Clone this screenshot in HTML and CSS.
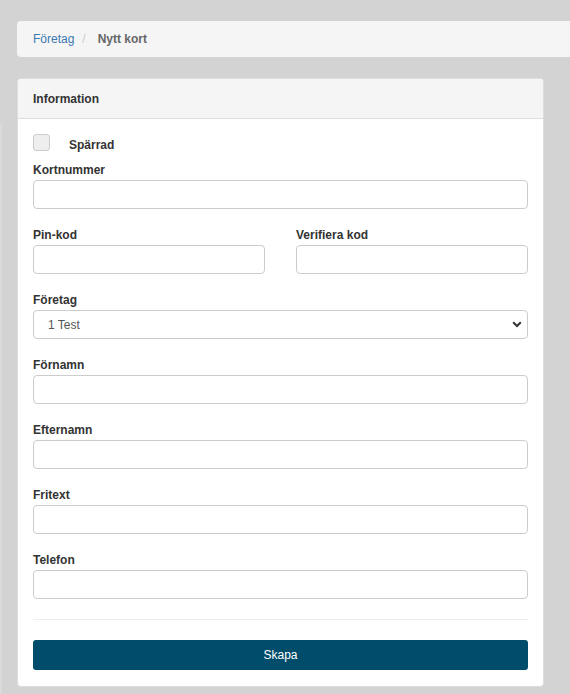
FILE: index.html
```
<!DOCTYPE html>
<html lang="sv">
<head>
<meta charset="utf-8">
<title>Nytt kort</title>
<link rel="stylesheet" href="styles.css">
</head>
<body>
<div class="edge"></div>
<div class="page">
  <nav class="crumbs">
    <a class="crumb-link" href="#">Företag</a>
    <span class="crumb-sep">/</span>
    <span class="crumb-active">Nytt kort</span>
  </nav>
  <section class="card">
    <header class="card-head">Information</header>
    <div class="card-body">
      <div class="check-row">
        <span class="checkbox"></span>
        <span class="check-label">Spärrad</span>
      </div>
      <div class="group">
        <label class="lbl">Kortnummer</label>
        <div class="input"></div>
      </div>
      <div class="group row2">
        <div class="col">
          <label class="lbl">Pin-kod</label>
          <div class="input"></div>
        </div>
        <div class="col">
          <label class="lbl">Verifiera kod</label>
          <div class="input"></div>
        </div>
      </div>
      <div class="group">
        <label class="lbl">Företag</label>
        <div class="input select">
          <span class="select-text">1 Test</span>
          <svg class="chev" width="10" height="7" viewBox="0 0 10 7"><path d="M1.2 1.3 L5 5 L8.8 1.3" fill="none" stroke="#333" stroke-width="2"/></svg>
        </div>
      </div>
      <div class="group">
        <label class="lbl">Förnamn</label>
        <div class="input"></div>
      </div>
      <div class="group">
        <label class="lbl">Efternamn</label>
        <div class="input"></div>
      </div>
      <div class="group">
        <label class="lbl">Fritext</label>
        <div class="input"></div>
      </div>
      <div class="group last">
        <label class="lbl">Telefon</label>
        <div class="input"></div>
      </div>
      <hr class="divider">
      <button class="btn">Skapa</button>
    </div>
  </section>
</div>
</body>
</html>
```
FILE: styles.css
```
html, body {
  margin: 0;
  padding: 0;
  background: #d3d3d3;
  font-family: "Liberation Sans", Arial, sans-serif;
  font-size: 12px;
  color: #333;
}
.edge {
  position: absolute;
  left: 0;
  top: 124px;
  width: 2px;
  height: 570px;
  background: #dadada;
}
.page {
  padding: 21px 0 0 17px;
}
.crumbs {
  background: #f5f5f5;
  height: 36px;
  display: flex;
  align-items: center;
  padding-left: 16px;
  border-radius: 4px 0 0 4px;
  line-height: 20px;
}
.crumb-link {
  color: #3c79b0;
  text-decoration: none;
}
.crumb-sep {
  color: #ccc;
  padding: 0 12px 0 8px;
}
.crumb-active {
  color: #666;
  font-weight: bold;
}
.card {
  margin-top: 21px;
  width: 525px;
  background: #fff;
  border: 1px solid #ddd;
  border-radius: 4px;
  overflow: hidden;
}
.card-head {
  height: 39px;
  background: #f5f5f5;
  border-bottom: 1px solid #ddd;
  display: flex;
  align-items: center;
  padding-left: 15px;
  font-weight: bold;
}
.card-body {
  padding: 15px 15px 16px 15px;
}
.check-row {
  display: flex;
  align-items: center;
  height: 17px;
  margin-bottom: 12px;
}
.checkbox {
  width: 15px;
  height: 15px;
  border: 1px solid #ccc;
  border-radius: 3px;
  background: #eee;
}
.check-label {
  margin-left: 19px;
  font-weight: bold;
  margin-top: 4px;
}
.group {
  margin-bottom: 19px;
}
.group.last {
  margin-bottom: 20px;
}
.row2 {
  display: grid;
  grid-template-columns: 232px 232px;
  justify-content: space-between;
}
.lbl {
  display: block;
  font-weight: bold;
  line-height: 14px;
  margin-bottom: 3px;
}
.input {
  height: 27px;
  border: 1px solid #ccc;
  border-radius: 4px;
  background: #fff;
}
.select {
  position: relative;
  display: flex;
  align-items: center;
}
.select-text {
  padding-left: 14px;
  color: #555;
}
.chev {
  position: absolute;
  right: 5px;
  top: 10px;
}
.divider {
  border: 0;
  border-top: 1px solid #eee;
  margin: 0 0 20px 0;
}
.btn {
  display: block;
  width: 100%;
  height: 30px;
  border: 0;
  border-radius: 3px;
  background: #004c6b;
  color: #fff;
  font-family: "Liberation Sans", Arial, sans-serif;
  font-size: 12px;
}
```
